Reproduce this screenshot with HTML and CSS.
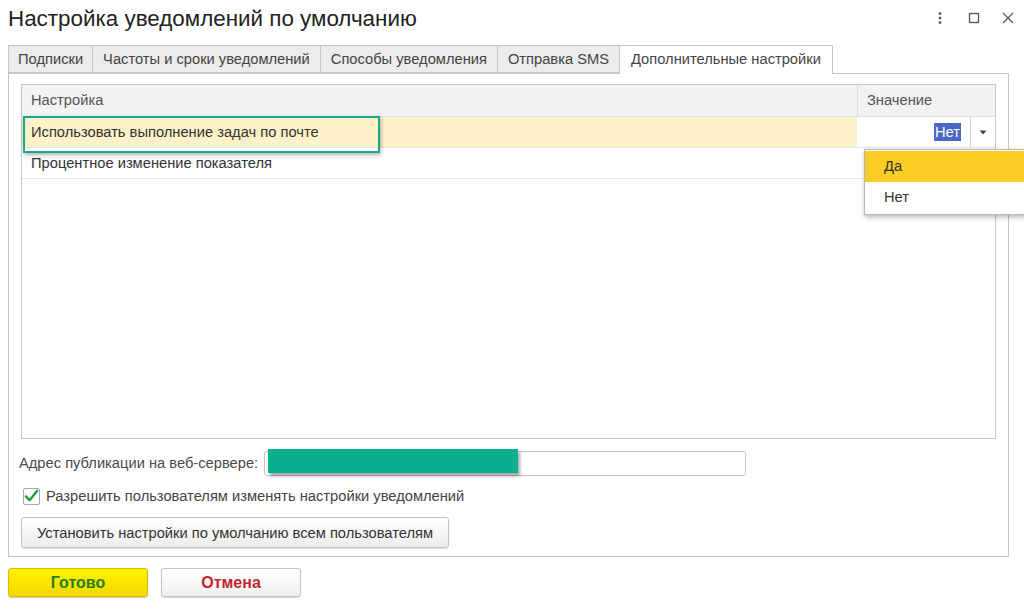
FILE: index.html
```html
<!DOCTYPE html>
<html lang="ru">
<head>
<meta charset="utf-8">
<title>Настройка уведомлений по умолчанию</title>
<link rel="stylesheet" href="styles.css">
</head>
<body>
<div class="window">
  <header class="titlebar">
    <h1 class="title">Настройка уведомлений по умолчанию</h1>
    <div class="controls">
      <svg class="ctl" width="14" height="14" viewBox="0 0 14 14"><circle cx="7" cy="2.5" r="1.5" fill="#666"/><circle cx="7" cy="7" r="1.5" fill="#666"/><circle cx="7" cy="11.5" r="1.5" fill="#666"/></svg>
      <svg class="ctl" width="14" height="14" viewBox="0 0 14 14"><rect x="2.5" y="2.5" width="9" height="9" fill="none" stroke="#555" stroke-width="1.3"/></svg>
      <svg class="ctl" width="14" height="14" viewBox="0 0 14 14"><path d="M2 2 L12 12 M12 2 L2 12" stroke="#555" stroke-width="1.3" fill="none"/></svg>
    </div>
  </header>

  <nav class="tabs">
    <div class="tab">Подписки</div>
    <div class="tab">Частоты и сроки уведомлений</div>
    <div class="tab">Способы уведомления</div>
    <div class="tab">Отправка SMS</div>
    <div class="tab active">Дополнительные настройки</div>
  </nav>

  <section class="panel">
    <div class="grid">
      <div class="grid-head">
        <div class="col-name">Настройка</div>
        <div class="col-value">Значение</div>
      </div>
      <div class="grid-row current">
        <div class="col-name"><span class="mark">Использовать выполнение задач по почте</span></div>
        <div class="col-value edit">
          <span class="val"><span class="sel">Нет</span></span>
          <span class="drop"><svg width="8" height="5" viewBox="0 0 8 5"><path d="M0.5 0.5 L7.5 0.5 L4 4.5 Z" fill="#444"/></svg></span>
        </div>
      </div>
      <div class="grid-row">
        <div class="col-name">Процентное изменение показателя</div>
        <div class="col-value"></div>
      </div>
      <div class="popup">
        <div class="opt hot">Да</div>
        <div class="opt">Нет</div>
      </div>
    </div>

    <div class="field-row">
      <label class="label">Адрес публикации на веб-сервере:</label>
      <div class="input"><div class="redact"></div></div>
    </div>

    <div class="check-row">
      <span class="checkbox"><svg width="16" height="14" viewBox="0 0 16 14"><path d="M2 7.5 L6 11.5 L14 1.5" stroke="#17a03a" stroke-width="2.6" fill="none" stroke-linecap="round" stroke-linejoin="round"/></svg></span>
      <span class="check-label">Разрешить пользователям изменять настройки уведомлений</span>
    </div>

    <button class="btn">Установить настройки по умолчанию всем пользователям</button>
  </section>

  <footer class="footer">
    <button class="fbtn ok">Готово</button>
    <button class="fbtn cancel">Отмена</button>
  </footer>
</div>
</body>
</html>
```

FILE: styles.css
```css
* { box-sizing: border-box; }
html, body { margin: 0; padding: 0; background: #fff; }
body {
  font-family: "Liberation Sans", Arial, sans-serif;
  font-size: 14.7px;
  color: #333;
  width: 1024px;
  height: 609px;
  overflow: hidden;
}
.window { display: flex; flex-direction: column; }

.titlebar {
  display: flex;
  align-items: center;
  justify-content: space-between;
  height: 40px;
  padding: 0 9px 0 8px;
}
.title {
  margin: 0;
  font-weight: normal;
  font-size: 22.4px;
  color: #222;
  line-height: 26px;
  margin-top: -3px;
}
.controls { display: flex; gap: 20px; margin-top: -4px; }
.ctl { display: block; }

.tabs {
  display: flex;
  margin-top: 5px;
  padding-left: 8px;
  height: 29px;
  position: relative;
  z-index: 1;
}
.tab {
  height: 28px;
  padding: 0 10px;
  line-height: 27px;
  background: #ececec;
  border: 1px solid #c6c6c6;
  border-left: none;
  color: #444;
  white-space: nowrap;
}
.tab:first-child { border-left: 1px solid #c6c6c6; padding: 0 9px; }
.tab.active {
  background: #fff;
  height: 29px;
  border-bottom: none;
  padding: 0 11px;
}

.panel {
  margin: -1px 15px 0 8px;
  border: 1px solid #c6c6c6;
  padding: 10px 12px 8px 12px;
  display: flex;
  flex-direction: column;
}

.grid {
  position: relative;
  height: 355px;
  border: 1px solid #c6c6c6;
}
.grid-head, .grid-row { display: flex; }
.grid-head {
  height: 32px;
  background: #f2f2f2;
  border-bottom: 1px solid #dedede;
  color: #555;
}
.grid-head .col-name, .grid-head .col-value { line-height: 31px; }
.col-name { flex: 1; padding-left: 9px; white-space: nowrap; }
.col-value { width: 138px; padding-left: 9px; border-left: 1px solid #dedede; }
.grid-row { height: 31px; border-bottom: 1px solid #e6e6e6; line-height: 30px; }
.grid-row .col-value { border-left: none; }
.grid-row.current { background: #fcf1c9; }
.grid-row.current .col-name { position: relative; }
.mark { display: inline-block; }
.grid-row.current .col-name::before {
  content: "";
  position: absolute;
  left: 1px;
  top: -1px;
  width: 353px;
  height: 33px;
  border: 2.5px solid #19a98a;
  box-shadow: 1px 2px 4px rgba(0,0,0,0.3);
}
.edit {
  display: flex;
  background: #fff;
  padding-left: 0;
  border-left: 1px solid #e6e6e6;
}
.val { flex: 1; text-align: right; padding-right: 9px; }
.sel { background: #4b68c6; color: #fff; padding: 1px 1px; }
.drop {
  width: 25px;
  border-left: 1px solid #d4d4d4;
  display: flex;
  align-items: center;
  justify-content: center;
}

.popup {
  position: absolute;
  left: 842px;
  top: 64px;
  width: 170px;
  background: #fff;
  border: 1px solid #b8b8b8;
  box-shadow: 1px 2px 5px rgba(0,0,0,0.3);
  padding: 1px 0;
}
.opt { height: 31px; line-height: 31px; padding-left: 19px; color: #333; }
.opt.hot { background: #fbcd24; }

.field-row {
  display: flex;
  align-items: center;
  margin-top: 11px;
  height: 26px;
}
.label { color: #4a4a4a; margin-left: -2px; margin-right: 6px; white-space: nowrap; }
.input {
  position: relative;
  width: 482px;
  height: 25px;
  border: 1px solid #c6c6c6;
  border-radius: 3px;
}
.redact {
  position: absolute;
  left: 3px;
  top: -3px;
  width: 250px;
  height: 24px;
  background: #08b08f;
  box-shadow: 2px 3px 3px rgba(0,0,0,0.35);
}

.check-row {
  display: flex;
  align-items: center;
  margin-top: 7px;
  height: 26px;
}
.checkbox {
  width: 17px;
  height: 17px;
  border: 1px solid #a8a8a8;
  border-radius: 2px;
  margin-left: 2px;
  display: flex;
  align-items: center;
  justify-content: center;
  background: #fff;
}
.check-label { margin-left: 6px; color: #444; }

.btn {
  align-self: flex-start;
  margin-top: 8px;
  height: 31px;
  padding: 0 15px;
  font-family: inherit;
  font-size: 14.7px;
  color: #333;
  border: 1px solid #c2c2c2;
  border-radius: 3px;
  background: linear-gradient(#ffffff, #ececec);
  box-shadow: 0 1px 1px rgba(0,0,0,0.12);
}

.footer {
  display: flex;
  gap: 13px;
  padding: 11px 0 0 8px;
}
.fbtn {
  width: 140px;
  height: 29px;
  font-family: inherit;
  font-size: 16px;
  font-weight: bold;
  border-radius: 3px;
}
.ok {
  color: #1f7f1f;
  background: linear-gradient(#fff200, #f5d700);
  border: 1px solid #d6ba00;
  box-shadow: 0 1px 1px rgba(0,0,0,0.2);
}
.cancel {
  color: #c0262d;
  background: linear-gradient(#ffffff, #efefef);
  border: 1px solid #c2c2c2;
  box-shadow: 0 1px 1px rgba(0,0,0,0.15);
}
```
